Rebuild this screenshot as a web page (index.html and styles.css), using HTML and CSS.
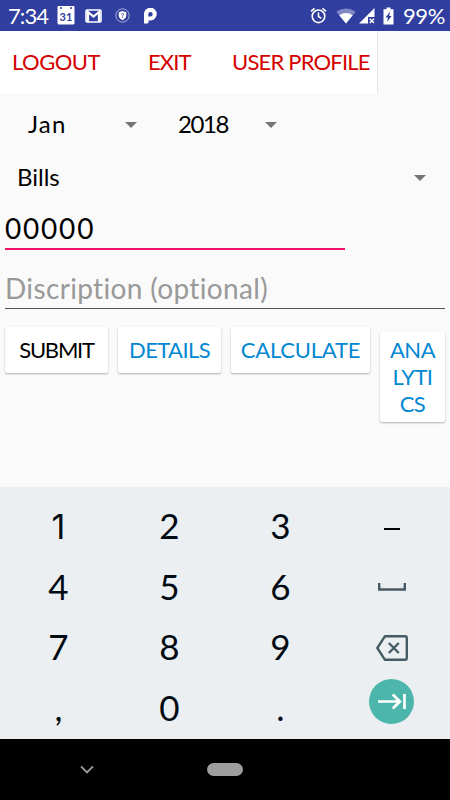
FILE: index.html
```
<!DOCTYPE html>
<html lang="en">
<head>
  <meta charset="UTF-8">
  <meta name="viewport" content="width=device-width, initial-scale=1">
  <title>Expenses</title>
  <link rel="stylesheet" href="styles.css">
</head>
<body>
  <div class="statusbar">
    <span class="clock">7:34</span>
    <svg class="ic-calendar" width="18" height="19" viewBox="0 0 18 19">
      <path fill="#fff" d="M1.5 0H16.5Q17.5 0 17.5 1V17Q17.500 18.500 16 18.500H2Q.5 18.500 .5 17V1Q.5 0 1.500 0Z"/>
      <circle cx="4" cy="2" r="1" fill="#303f9f"/>
      <circle cx="14" cy="2" r="1" fill="#303f9f"/>
      <text class="cal-day" x="9" y="14.500" text-anchor="middle">31</text>
    </svg>
    <svg class="ic-mail" width="17" height="14" viewBox="0 0 17 14">
      <rect x="1" y="1" width="15" height="12" rx="1" fill="none" stroke="#fff" stroke-width="1.600"/>
      <path d="M3 13V3L8.500 7.500L14 3V13" fill="none" stroke="#fff" stroke-width="2.200"/>
    </svg>
    <svg class="ic-shield" width="15" height="15" viewBox="0 0 15 15">
      <circle cx="7.500" cy="7.500" r="6.700" fill="none" stroke="#c5cae9" stroke-width=".8"/>
      <path d="M7.500 3L11.300 4.200V7.500Q11 10.500 7.500 12.300Q4 10.500 3.700 7.500V4.200Z" fill="#fff"/>
      <path d="M6.300 6.200Q7.500 4.800 8.600 6Q8.800 7 7.500 7.700V8.500M7.500 9.300V10" fill="none" stroke="#303f9f" stroke-width=".9"/>
    </svg>
    <svg class="ic-p" width="13" height="16" viewBox="0 0 13 16">
      <path fill="#fff" fill-rule="evenodd" d="M0 15.500V6.500A6.400 6.400 0 1 1 6.400 12.500H4.500V14Q4.500 15.500 3 15.500ZM6.500 4A2.200 2.200 0 0 0 4.300 6.200V8.400H6.500A2.200 2.200 0 0 0 6.500 4Z"/>
    </svg>
    <div class="status-right">
      <svg class="ic-alarm" width="17" height="17" viewBox="0 0 17 17" fill="none" stroke="#fff" stroke-width="1.600">
        <circle cx="8.500" cy="9.300" r="6.300"/>
        <path d="M8.500 5.500V9.500L11.300 11.300M1 4.300L4.500 1.300M16 4.300L12.500 1.300"/>
      </svg>
      <svg class="ic-wifi" width="20" height="16" viewBox="0 0 20 16">
        <path d="M10 15.500L.3 3.800Q10 -3 19.700 3.800Z" fill="#7f88c4"/>
        <path d="M10 15.500L3.300 7.300Q10 2.600 16.700 7.300Z" fill="#fff"/>
      </svg>
      <svg class="ic-signal" width="16" height="16" viewBox="0 0 16 16">
        <path d="M0 15.500L15.500 0V9H9V15.500Z" fill="#fff"/>
        <path d="M10.700 10.700L15 15M15 10.700L10.700 15" stroke="#fff" stroke-width="1.400"/>
      </svg>
      <svg class="ic-battery" width="11" height="18" viewBox="0 0 11 18">
        <path d="M3.500 .5H7.500V2.200H10.500V17.500H.5V2.200H3.500Z" fill="#fff"/>
        <path d="M7.200 4.500L2.500 10.500H5L4 15L8.600 8.900H6.200Z" fill="#303f9f"/>
      </svg>
      <span class="percent">99%</span>
    </div>
  </div>

  <div class="menu">
    <a class="menu-item logout">LOGOUT</a>
    <a class="menu-item exit">EXIT</a>
    <a class="menu-item profile">USER PROFILE</a>
  </div>

  <div class="form">
    <div class="date-row">
      <div class="spinner month"><span>Jan</span><i class="caret"></i></div>
      <div class="spinner year"><span>2018</span><i class="caret"></i></div>
    </div>
    <div class="spinner category"><span>Bills</span><i class="caret"></i></div>
    <div class="field amount"><span>00000</span></div>
    <div class="field description"><span>Discription (optional)</span></div>

    <div class="buttons">
      <button class="btn submit">SUBMIT</button>
      <button class="btn details">DETAILS</button>
      <button class="btn calculate">CALCULATE</button>
      <button class="btn analytics">ANA<br>LYTI<br>CS</button>
    </div>
  </div>

  <div class="keypad">
    <div class="key one">1</div>
    <div class="key">2</div>
    <div class="key">3</div>
    <div class="key"><i class="dash"></i></div>
    <div class="key">4</div>
    <div class="key">5</div>
    <div class="key">6</div>
    <div class="key">
      <svg class="ic-space" width="28" height="8" viewBox="0 0 28 8"><path d="M1.200 0V6.500H26.800V0" fill="none" stroke="#455a64" stroke-width="2.400"/></svg>
    </div>
    <div class="key">7</div>
    <div class="key">8</div>
    <div class="key">9</div>
    <div class="key">
      <svg class="ic-delete" width="32" height="26" viewBox="0 0 32 26" fill="none" stroke="#455a64" stroke-width="2.400">
        <path d="M9 1.200H29Q30.800 1.200 30.800 3V23Q30.800 24.800 29 24.800H9L1.300 13Z" stroke-linejoin="round"/>
        <path d="M12.800 8L22.800 18M22.800 8L12.800 18"/>
      </svg>
    </div>
    <div class="key">,</div>
    <div class="key">0</div>
    <div class="key">.</div>
    <div class="key enter">
      <svg width="45" height="45" viewBox="0 0 45 45">
        <circle cx="22.500" cy="22.500" r="22.500" fill="#4db6ac"/>
        <path d="M9 22.500H30M23.800 15.500L30.800 22.500L23.800 29.500M35.500 15V30" fill="none" stroke="#fff" stroke-width="2.700"/>
      </svg>
    </div>
  </div>

  <div class="navbar">
    <svg class="nav-back" width="14" height="9" viewBox="0 0 14 9"><path d="M1 1.300L7 7.300L13 1.300" fill="none" stroke="#9e9e9e" stroke-width="1.900"/></svg>
    <div class="nav-home"></div>
  </div>
</body>
</html>
```
FILE: styles.css
```
* {
  box-sizing: border-box;
}
body {
  margin: 0;
  width: 450px;
  height: 800px;
  display: flex;
  flex-direction: column;
  background: #fafafa;
  font-family: Lato, "Open Sans", sans-serif;
  font-size: 22px;
  font-variant-ligatures: none;
  color: #000;
  overflow: hidden;
}
svg {
  display: block;
  flex: none;
}

/* status bar */
.statusbar {
  height: 31px;
  display: flex;
  align-items: center;
  padding: 0 5px 0 8px;
  background: #303f9f;
  color: #fff;
}
.clock {
  width: 49px;
  letter-spacing: -0.9px;
}
.cal-day {
  font-size: 11px;
  font-weight: bold;
  fill: #303f9f;
}
.ic-mail {
  margin-left: 10px;
}
.ic-shield {
  margin-left: 13px;
}
.ic-p {
  margin-left: 14px;
}
.status-right {
  margin-left: auto;
  display: flex;
  align-items: center;
}
.ic-wifi {
  margin-left: 9px;
}
.ic-signal {
  margin-left: 3px;
}
.ic-battery {
  margin-left: 8px;
}
.percent {
  width: 42px;
  margin-left: 9px;
  letter-spacing: -0.4px;
}

/* top menu */
.menu {
  width: 378px;
  height: 62px;
  display: flex;
  align-items: center;
  padding-bottom: 2px;
  background: #fff;
  border-right: 1px solid #e4e4e4;
  color: #d50000;
  white-space: nowrap;
}
.logout {
  width: 148px;
  padding-left: 12px;
  letter-spacing: -0.5px;
}
.exit {
  width: 84px;
  letter-spacing: -0.9px;
}
.profile {
  letter-spacing: -0.8px;
}

/* form */
.form {
  height: 394px;
}
.date-row {
  display: flex;
  height: 58px;
  padding: 6px 0 0 28px;
}
.spinner {
  display: flex;
  align-items: center;
  justify-content: space-between;
  font-size: 24px;
}
.spinner span {
  padding-bottom: 3px;
}
.month {
  width: 109px;
  letter-spacing: 1.2px;
}
.year {
  width: 99px;
  margin-left: 41px;
  letter-spacing: -1.4px;
}
.category {
  height: 54px;
  padding: 0 24px 0 17px;
}
.caret {
  border: 6.5px solid transparent;
  border-top-color: #757575;
  border-bottom: 0;
}
.field {
  display: flex;
  align-items: center;
  font-size: 28px;
  margin: 0 5px;
}
.amount {
  width: 340px;
  height: 45px;
  padding-top: 2px;
  border-bottom: 2px solid #f50f6c;
  letter-spacing: 1.8px;
}
.description {
  height: 59px;
  padding-top: 18px;
  border-bottom: 1px solid #555;
  color: #999;
  letter-spacing: 0.35px;
}
.buttons {
  display: flex;
  align-items: flex-start;
  gap: 10px;
  padding: 18px 5px 0;
}
.btn {
  height: 46px;
  padding: 0 0 1px;
  border: 0;
  border-radius: 2px;
  background: #fff;
  box-shadow: 0 1px 2px rgba(0, 0, 0, 0.3);
  color: #0288d1;
  font: 22px/27px Lato, "Open Sans", sans-serif;
}
.submit {
  width: 103px;
  color: #000;
  letter-spacing: -1.2px;
}
.details {
  width: 103px;
  letter-spacing: -0.6px;
}
.calculate {
  width: 139px;
  letter-spacing: -0.2px;
}
.analytics {
  width: 65px;
  height: 90px;
  margin-top: 5px;
  letter-spacing: -0.5px;
}

/* number keyboard */
.keypad {
  height: 252px;
  display: grid;
  grid-template-columns: repeat(4, 111px);
  grid-auto-rows: 60.5px;
  padding: 8px 3px 0;
  background: #eceff1;
  color: #000a12;
  font-size: 35px;
}
.key {
  display: flex;
  align-items: center;
  justify-content: center;
}
.one {
  padding-top: 2px;
  font-family: Inter, sans-serif;
  font-size: 34px;
}
.dash {
  width: 16px;
  height: 2px;
  margin-top: 7px;
  background: #000;
}
.ic-space,
.ic-delete {
  margin-top: 3px;
}
.enter {
  padding-bottom: 10px;
}

/* system navigation */
.navbar {
  height: 61px;
  display: flex;
  align-items: center;
  background: #000;
}
.nav-back {
  margin-left: 80px;
}
.nav-home {
  width: 36px;
  height: 13px;
  margin-left: 113px;
  border-radius: 7px;
  background: #9e9e9e;
}
```
